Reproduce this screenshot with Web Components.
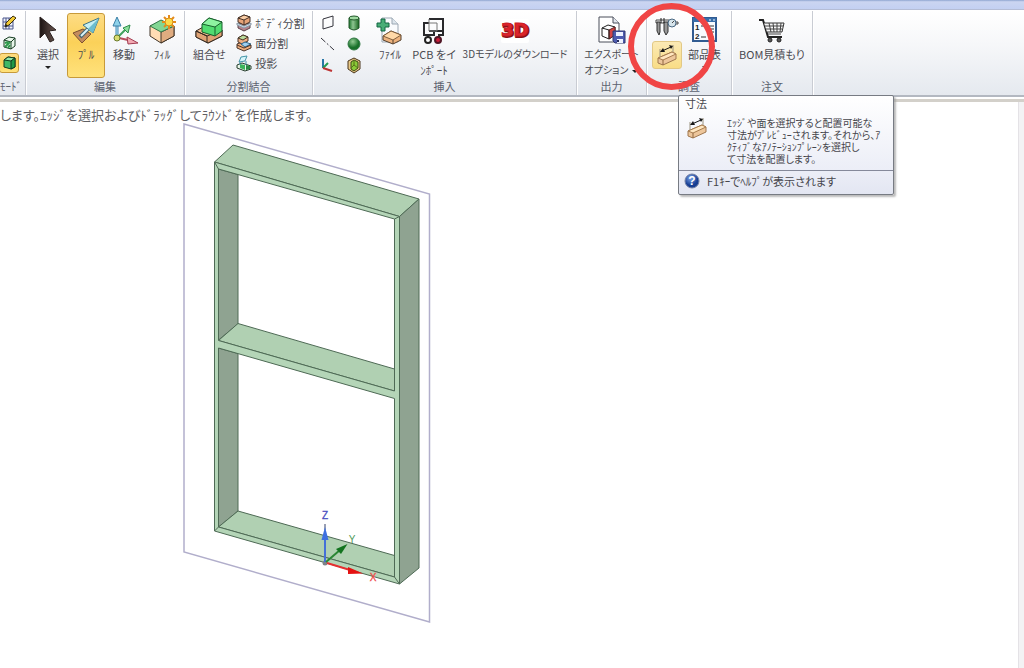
<!DOCTYPE html>
<html lang="ja">
<head>
<meta charset="utf-8">
<title>3D CAD</title>
<style>
html,body{margin:0;height:100%}
body{font:11px/16px "Noto Sans CJK JP",sans-serif;font-feature-settings:"palt";color:#4a4a50;background:#fff;overflow:hidden}
</style>
</head>
<body>
<cad-window></cad-window>
<script>
const ICONS = {
sketch:[16,16,`<path d="M2 3h10v11H2zM5 3v11M8 3v11M2 7h10M2 11h10" fill="#eef1fa" stroke="#4a568c"/><path d="M4 12l1-4 7-7 3 2-7 7z" fill="#f2ca35" stroke="#3a3010"/><path d="M4 12l1-3 2 2z" fill="#222"/>`],
section:[16,16,`<path d="M3 5l5-3 6 1v8l-4 3-7-2z" fill="#e8f5ea" stroke="#173d22"/><path d="M3 5l7 2 4-4M10 7v7" fill="none" stroke="#173d22"/><path d="M4 8l3-1M4 12l5-5M7 13l2-3" stroke="#2f9a4c" stroke-width="2"/>`],
solid:[16,16,`<path d="M3 5l4-3 7 1v9l-4 2-7-2z" fill="#3fb866" stroke="#123c20"/><path d="M3 5l4-3 7 1-4 3z" fill="#8ee5a6" stroke="#123c20"/><path d="M10 6l4-3v9l-4 2z" fill="#1f9a48" stroke="#123c20"/>`],
select:[28,28,`<defs><linearGradient id="a"><stop offset="0" stop-color="#1c1413"/><stop offset="1" stop-color="#6b5650"/></linearGradient></defs><path d="M6 1l16 13-7 1 5 9-4 2-5-9-5 5z" fill="url(#a)" stroke="#2a201e"/>`],
pull:[28,28,`<path d="M1 17l10-4 8 5-9 9z" fill="#c48c5e" stroke="#7c5030"/><path d="M8 21l9-9" stroke="#456673" stroke-width="4"/><path d="M9 20l9-9" stroke="#d9f4f8" stroke-width="2"/><path d="M27 2L11 9l10 8z" fill="#c5eff5" stroke="#3c7284"/><path d="M27 2L16 13l5 4z" fill="#6dbdce"/>`],
move:[28,28,`<path d="M7 22V8" stroke="#3e87b5" stroke-width="3"/><path d="M7 21V8" stroke="#bce7f4"/><path d="M7 1L3 10h8z" fill="#8fd2ea" stroke="#3a7fa6"/><path d="M8 21l7-7" stroke="#3fa05d" stroke-width="2"/><path d="M20 9l-7 3 5 5z" fill="#8ddf9d" stroke="#2d8b4a"/><path d="M9 22l9 2" stroke="#b84a5f" stroke-width="2"/><path d="M28 27l-11-6 1 7z" fill="#f3aab3" stroke="#a23b50"/><circle cx="7" cy="22" r="3" fill="#d9dd70" stroke="#6a792b"/>`],
fill:[28,28,`<path d="M2 10l12-5 12 5v10l-13 7-11-7z" fill="#ffdcb4" stroke="#403428"/><path d="M13 16l13-6v10l-13 7z" fill="#e0ac80" stroke="#403428"/><path d="M2 10l11-6 13 6-13 6z" fill="#82d693" stroke="#347849"/><path d="M21-1v14M14 6h14M16 1l10 10M16 11L26 1" stroke="#e58b1b" stroke-width="2"/><circle cx="21" cy="6" r="4" fill="#ffdc4b" stroke="#d78c17"/>`],
combine:[28,28,`<path d="M1 15l9-5 17 4v6l-14 7-12-6z" fill="#f1bd91" stroke="#332820"/><path d="M1 15l11 5 15-6v6l-14 7-12-6z" fill="#dfa273" stroke="#332820"/><path d="M1 15l11 5v7" fill="none" stroke="#332820"/><path d="M7 8l7-6 13 4v9l-7 5-13-4z" fill="#52dc70" stroke="#185f2c"/><path d="M7 8l7-6 13 4-7 5z" fill="#8df3a0" stroke="#185f2c"/><path d="M20 11v9" stroke="#185f2c"/>`],
splitbody:[16,16,`<path d="M2 9l5-2 7 2v4l-6 3-6-3z" fill="#b8838d" stroke="#5b444b"/><path d="M1 8l7 3 7-3v2l-7 3-7-3z" fill="#c8dcea" stroke="#8c98a4"/><path d="M2 3l6-3 6 2v5l-6 3-6-3z" fill="#e7a378" stroke="#443126"/><path d="M2 3l6-3 6 2-6 3zM8 5v5" fill="#f9cda5" stroke="#443126"/>`],
splitface:[16,16,`<path d="M1 9l5-2 9 3v3l-7 3-7-3z" fill="#efac7b" stroke="#49352a"/><path d="M2 3l5-3 5 2v4L6 9 2 7z" fill="#efaf82" stroke="#49352a"/><path d="M2 3l5-3 5 2-5 3z" fill="#b9dc9c" stroke="#49352a"/><path d="M5 9l4-2 6 2-6 3z" fill="#9fd0f2" stroke="#34698a"/><path d="M1 10l7 3 7-3" fill="none" stroke="#49352a"/>`],
project:[16,16,`<path d="M1 10l5-2 9 3v3l-6 2-8-3z" fill="#e8f4e8" stroke="#243c2b"/><path d="M4 9l5 1v5l-5-2z" fill="#3cb45b"/><path d="M10 10l4 1v3l-4 1z" fill="#298b43"/><path d="M5 2l6-1-2 5-6 1z" fill="#d8f6fb" stroke="#4595a8"/><path d="M4 7v3M10 6v4" stroke="#4595a8"/>`],
plane:[16,16,`<path d="M3 4l10-3v10L3 14z" fill="none" stroke="#34343c"/>`],
line:[16,16,`<path d="M1 2l13 12" stroke="#34343c" stroke-dasharray="6 2 2 2"/>`],
axes:[16,16,`<path d="M3 2v9" stroke="#2877a7" stroke-width="2"/><path d="M3 11l5-5" stroke="#239c50" stroke-width="2"/><path d="M3 11l9 3" stroke="#bd3333" stroke-width="2"/>`],
cylinder:[16,16,`<defs><linearGradient id="c"><stop stop-color="#1b742b"/><stop offset=".4" stop-color="#8ec591"/><stop offset="1" stop-color="#17651f"/></linearGradient></defs><path d="M3 3v10q5 4 10 0V3" fill="url(#c)" stroke="#205729"/><ellipse cx="8" cy="3" rx="5" ry="2" fill="#9ed8a0" stroke="#205729"/>`],
sphere:[16,16,`<defs><radialGradient id="s" cx=".4" cy=".3"><stop stop-color="#93cb93"/><stop offset="1" stop-color="#19712a"/></radialGradient></defs><circle cx="8" cy="8" r="6" fill="url(#s)" stroke="#327844"/>`],
shell:[16,16,`<path d="M2 4l6-3 6 3v8l-6 4-6-4z" fill="#e8c887" stroke="#49351c"/><path d="M5 5l3-2 4 2v6l-4 3-3-2z" fill="#8acb37" stroke="#3d4a16"/><path d="M8 3v5l-3 3M8 8l4 3" fill="none" stroke="#58701b"/>`],
file:[28,28,`<path d="M6 2h10l6 6v18H6z" fill="#f9fbfd" stroke="#9ba7b3"/><path d="M16 2v6h6" fill="#dce5ec" stroke="#9ba7b3"/><path d="M5 3h4v4h4v4H9v4H5v-4H1V7h4z" fill="#48ad76" stroke="#136643"/><path d="M7 20l8-5 10 4v5l-8 4-10-4z" fill="#edb27d" stroke="#54402d"/><path d="M7 20l8-5 10 4-8 5z" fill="#ffd9a8" stroke="#805e3c"/><path d="M17 24v4" stroke="#54402d"/>`],
pcb:[28,28,`<path d="M9 3h14v12H9M9 7H4v12h4v3M23 15v4h-4v3M14 15v4H8" fill="none" stroke="#29292c" stroke-width="2"/><path d="M9 3v12h8V7H9" fill="none" stroke="#777"/><circle cx="8" cy="24" r="3" fill="#fff" stroke="#222" stroke-width="2"/><circle cx="18" cy="24" r="3" fill="#c91d39" stroke="#501525" stroke-width="2"/>`],
three:[32,28,`<rect x="2" y="3" width="28" height="24" rx="2" fill="#fff"/><g font-family="DejaVu Sans" font-weight="bold" font-size="18"><text x="3" y="21" fill="#8a1218" stroke="#8a1218" stroke-width="2">3D</text><text x="2" y="20" fill="#df242b" stroke="#cc2028">3D</text></g>`],
export:[28,28,`<path d="M1 1h14l6 6v19H1z" fill="#fff" stroke="#4b4f5b"/><path d="M15 1v6h6" fill="#e3e7ee" stroke="#4b4f5b"/><path d="M4 12l6-3 7 2v8l-6 4-7-3z" fill="#fff" stroke="#222"/><path d="M11 14l6-3v8l-6 4z" fill="#d64646" stroke="#672323"/><path d="M4 12l7 2v9" fill="none" stroke="#222"/><path d="M15 15h12v12H17l-2-2z" fill="#4e5caf" stroke="#30366f"/><path d="M18 16h7v4h-7zM19 23h6v4h-6z" fill="#eef2ff"/><path d="M20 24v2" stroke="#252c5a" stroke-width="2"/>`],
caliper:[22,18,`<path d="M0 2h13v3H0z" fill="#f4f4f4" stroke="#444"/><path d="M1 4h3v10l-1 3-2-4zM8 4h4v10l-2 3-2-4z" fill="#999" stroke="#333"/><path d="M5 0v5M8 0v5" stroke="#222"/><circle cx="16" cy="5" r="4" fill="#d6e4eb" stroke="#496882"/><path d="M16 5l2-2M20 4h2v2h-2" stroke="#444" fill="none"/>`],
dimension:[22,22,`<path d="M2 14l14-6 4 2v5L7 21l-5-2z" fill="#edc69b" stroke="#9f774f"/><path d="M2 14l14-6 4 2-13 6z" fill="#ffe6bf" stroke="#a67b4e"/><path d="M7 16v5" stroke="#8f673f"/><path d="M4 5v8M17 1v7" stroke="#9a927e"/><path d="M6 7l9-4" stroke="#171717"/><path d="M4 8l3-4 2 4zM17 2l-4-1 2 4z" fill="#171717"/>`],
parts:[28,28,`<path d="M2 2h23v23H2z" fill="#f8fbff" stroke="#315b91" stroke-width="2"/><path d="M2 2h23v4H2z" fill="#376da9"/><path d="M18 4h2M22 4h2" stroke="#fff"/><g font-family="Liberation Sans" font-weight="bold" font-size="8" fill="#222"><text x="4" y="14">1</text><text x="4" y="23">2</text></g><path d="M10 10h5M16 13h7M16 16h7M10 21h5M17 21h6" stroke="#333"/><path d="M17 10h6" stroke="#333"/>`],
cart:[28,28,`<path d="M1 4h4l5 17h14" fill="none" stroke="#222" stroke-width="2"/><path d="M6 7h20l-2 9H9" fill="#f6f6f6" stroke="#333"/><path d="M7 10h18M8 13h16M11 7l2 9M15 7l1 9M19 7v9M23 7l-1 9" stroke="#444"/><path d="M10 18h13" stroke="#444"/><circle cx="12" cy="24" r="2" fill="#555" stroke="#222"/><circle cx="21" cy="24" r="2" fill="#555" stroke="#222"/>`],
help:[16,16,`<defs><radialGradient id="h" cx=".4" cy=".3"><stop stop-color="#7da6ec"/><stop offset="1" stop-color="#163d92"/></radialGradient></defs><circle cx="8" cy="8" r="7" fill="url(#h)" stroke="#7280a5"/><text x="8" y="12" text-anchor="middle" font-family="Liberation Sans" font-weight="bold" font-size="12" fill="#fff">?</text>`]
};

class CadIcon extends HTMLElement{
 connectedCallback(){
  const [w,h,body]=ICONS[this.getAttribute('name')];
  this.attachShadow({mode:'open'}).innerHTML=`<style>:host{display:block;flex:none}svg{display:block;overflow:visible}</style><svg width="${w}" height="${h}" viewBox="0 0 ${w} ${h}" aria-hidden="true">${body}</svg>`;
 }
}
customElements.define('cad-icon',CadIcon);

class RibbonTool extends HTMLElement{
 connectedCallback(){
  const title=this.getAttribute('title-text');
  this.attachShadow({mode:'open'}).innerHTML=`<style>
  :host{display:block;flex:none}
  button{all:unset;box-sizing:border-box;display:flex;width:100%;align-items:center;cursor:default;white-space:nowrap;border:1px solid transparent;border-radius:3px}
  :host([large]) button{flex-direction:column;height:65px;padding-top:2px;gap:2px;text-align:center}
  :host(:not([large])) button{height:20px;gap:3px;padding:0 1px}
  :host([square]) button{height:28px;justify-content:center}
  :host([active]) button{background:linear-gradient(#fddc85,#fbd159 45%,#ffe27c);border-color:#c79a3a}
  :host([soft]) button{background:linear-gradient(#fbeab5,#f9dd86);border-color:#e2c986}
  :host([compact]) span{font-size:10px}
  .drop{width:0;height:0;margin-top:2px;border:3px solid transparent;border-top-color:#222;border-bottom:0}
  </style><button type="button" ${title?`aria-label="${title}"`:''}><cad-icon name="${this.getAttribute('icon')}"></cad-icon>${title?'':'<span><slot></slot></span>'}${this.hasAttribute('drop')?'<i class="drop"></i>':''}</button>`;
 }
}
customElements.define('ribbon-tool',RibbonTool);

class RibbonGroup extends HTMLElement{
 connectedCallback(){
  this.attachShadow({mode:'open'}).innerHTML=`<style>
  :host{display:flex;flex-direction:column;flex:none;box-sizing:border-box;position:relative;border-right:1px solid #c9ccd3;box-shadow:1px 0 #fff;padding-top:2px}
  .tools{display:flex;height:65px;justify-content:var(--tools,center);gap:var(--gap,0)}
  .name{text-align:center;color:#5c626f;white-space:nowrap}
  </style><div class="tools"><slot></slot></div><div class="name">${this.getAttribute('name')}</div><slot name="over"></slot>`;
 }
}
customElements.define('ribbon-group',RibbonGroup);

class ToolHint extends HTMLElement{
 connectedCallback(){
  this.attachShadow({mode:'open'}).innerHTML=`<style>
  :host{display:block;position:absolute;z-index:3;width:216px;box-sizing:border-box;border:1px solid #777b83;border-radius:2px;background:linear-gradient(#fff,#eceef7 75%,#e3e6f2);box-shadow:2px 2px 2px #999a;color:#46464c}
  .title{padding:0 6px;line-height:14px}
  .body{display:flex;align-items:flex-start;gap:19px;padding:7px 7px 5px;font-size:10px;line-height:12px;white-space:nowrap}
  .foot{display:flex;align-items:flex-start;gap:7px;padding:2px 5px 5px;border-top:1px solid #85899a}
  </style><div class="title"><slot name="title"></slot></div><div class="body"><cad-icon name="dimension"></cad-icon><div class="text"><slot></slot></div></div><div class="foot"><cad-icon name="help"></cad-icon><slot name="foot"></slot></div>`;
 }
}
customElements.define('tool-hint',ToolHint);

class CadRibbon extends HTMLElement{
 connectedCallback(){
  this.attachShadow({mode:'open'}).innerHTML=`<style>
  :host{display:block}
  .caption{height:9px;background:linear-gradient(#8fa5d0 0,#cbd5f1 20%,#c3d0f2);border-bottom:1px solid #b5bdd6}
  nav{display:flex;height:84px;background:linear-gradient(#fff,#f6f7f9 40%,#e5e9ef);border-top:1px solid #fff;border-bottom:2px solid #b3b8c1}
  .col{display:flex;flex-direction:column}
  .grid{display:grid;grid-template-columns:24px 24px;grid-auto-rows:21px;align-content:start;gap:0 2px}
  .mode{width:22px}
  .mark{position:absolute;box-sizing:border-box;left:-19px;top:-8px;width:87px;height:87px;border:6px solid #f04545;border-radius:50%;z-index:4;pointer-events:none}
  tool-hint{left:31px;top:84px}
  .mini{display:inline-block;vertical-align:middle;margin-left:4px;border:3px solid transparent;border-top-color:#222;border-bottom:0}
  .btn38{width:38px}
  </style>
  <div class="caption"></div>
  <nav aria-label="リボン">
   <ribbon-group name="ﾓｰﾄﾞ" style="width:26px;--tools:flex-end;padding-right:6px">
    <div class="col mode"><ribbon-tool icon="sketch" title-text="スケッチ"></ribbon-tool><ribbon-tool icon="section" title-text="断面"></ribbon-tool><ribbon-tool active icon="solid" title-text="3D"></ribbon-tool></div>
   </ribbon-group>
   <ribbon-group name="編集" style="width:159px">
    <ribbon-tool class="btn38" large drop icon="select">選択</ribbon-tool><ribbon-tool class="btn38" large active icon="pull">ﾌﾟﾙ</ribbon-tool><ribbon-tool class="btn38" large icon="move">移動</ribbon-tool><ribbon-tool class="btn38" large icon="fill">ﾌｨﾙ</ribbon-tool>
   </ribbon-group>
   <ribbon-group name="分割結合" style="width:128px;--gap:6px">
    <ribbon-tool class="btn38" large icon="combine">組合せ</ribbon-tool>
    <div class="col"><ribbon-tool icon="splitbody">ﾎﾞﾃﾞｨ分割</ribbon-tool><ribbon-tool icon="splitface">面分割</ribbon-tool><ribbon-tool icon="project">投影</ribbon-tool></div>
   </ribbon-group>
   <ribbon-group name="挿入" style="width:264px;--gap:3px">
    <div class="grid"><ribbon-tool icon="plane" title-text="平面"></ribbon-tool><ribbon-tool icon="cylinder" title-text="円筒"></ribbon-tool><ribbon-tool icon="line" title-text="軸"></ribbon-tool><ribbon-tool icon="sphere" title-text="球"></ribbon-tool><ribbon-tool icon="axes" title-text="座標系"></ribbon-tool><ribbon-tool icon="shell" title-text="シェル"></ribbon-tool></div>
    <ribbon-tool class="btn38" large icon="file">ﾌｧｲﾙ</ribbon-tool>
    <ribbon-tool large icon="pcb" style="width:44px">PCB をイ<br>ﾝﾎﾟｰﾄ</ribbon-tool>
    <ribbon-tool large compact icon="three" style="width:112px">3Dモデルのダウンロード</ribbon-tool>
   </ribbon-group>
   <ribbon-group name="出力" style="width:70px"><ribbon-tool large compact icon="export" style="width:66px">エクスポート<br>オプション<i class="mini"></i></ribbon-tool></ribbon-group>
   <ribbon-group name="調査" style="width:85px;--gap:1px">
    <div class="col"><ribbon-tool square icon="caliper" title-text="測定" style="width:30px"></ribbon-tool><ribbon-tool square soft icon="dimension" title-text="寸法" style="width:30px"></ribbon-tool></div>
    <ribbon-tool large drop icon="parts" style="width:44px">部品表</ribbon-tool>
    <div slot="over" class="mark"></div>
    <tool-hint slot="over" role="tooltip"><span slot="title">寸法</span>ｴｯｼﾞや面を選択すると配置可能な<br>寸法がﾌﾟﾚﾋﾞｭｰされます。それから、ｱ<br>ｸﾃｨﾌﾞなｱﾉﾃｰｼｮﾝﾌﾟﾚｰﾝを選択し<br>て寸法を配置します。<span slot="foot">F1ｷｰでﾍﾙﾌﾟが表示されます</span></tool-hint>
   </ribbon-group>
   <ribbon-group name="注文" style="width:81px"><ribbon-tool large icon="cart">BOM見積もり</ribbon-tool></ribbon-group>
  </nav>`;
 }
}
customElements.define('cad-ribbon',CadRibbon);

class ModelView extends HTMLElement{
 connectedCallback(){
  this.attachShadow({mode:'open'}).innerHTML=`<style>
  :host{display:flex;min-height:0;overflow:hidden;margin-top:2px;border-top:3px solid #d3d0ca}
  main{flex:1;min-width:0;padding-top:4px}
  p{margin:0;font-size:13px;line-height:18px;white-space:nowrap;color:#606064}
  svg{display:block;margin-left:180px;overflow:visible}
  .edge{width:5px;background:#f3f2f4;border-left:1px solid #e4e2e6}
  </style><main><p>します。ｴｯｼﾞを選択およびﾄﾞﾗｯｸﾞしてﾗｳﾝﾄﾞを作成します。</p>
  <svg width="260" height="510" viewBox="180 124 260 510" role="img" aria-label="窓枠モデル">
   <path d="M184 124L429.500 194V622L184 552z" fill="none" stroke="#b1aecb" stroke-width="1.500"/>
   <g stroke="#4e6a55" stroke-width="1" stroke-linejoin="round">
    <path d="M218.500 169L238 174.500V324L218.500 340z" fill="#8fa391"/>
    <path d="M218.500 348L238 353.500V511L218.500 527z" fill="#8fa391"/>
    <path d="M218.500 340.500L238 323.500L394.500 369V391z" fill="#b0d0b2"/>
    <path d="M218.500 527L238 511L394.500 555.500V577z" fill="#b0d0b2"/>
    <path d="M214.500 162L233 145L419 199L399.500 216.500z" fill="#b0d0b2"/>
    <path d="M399.500 216.500L419 199V568L399.500 584z" fill="#8fa391"/>
    <path fill-rule="evenodd" d="M214.500 162L399.500 216.500V584L214.500 531zM218.500 169V340.500L394.500 391V219zM218.500 348V527L394.500 577V398.500z" fill="#b4d5b7"/>
    <path d="M214.500 162L218.500 169M399.500 216.500L394.500 219M399.500 584L394.500 577M214.500 531L218.500 527"/>
   </g>
   <circle cx="325" cy="563" r="2.500" fill="#7d8389"/>
   <path d="M325 562V536" stroke="#4470d8" stroke-width="2"/><path d="M325 524V530" stroke="#34406a"/><path d="M325 527L321.500 540H328.500z" fill="#3e70e0"/>
   <path d="M326 562L340 550" stroke="#2a8634" stroke-width="2"/><path d="M347.500 544L336 549L341 554z" fill="#12741f"/>
   <path d="M327 563L350 570" stroke="#e53030" stroke-width="2"/><path d="M363 573.500L348 567V574z" fill="#e41212"/>
   <g font-family="Liberation Sans" font-size="10" text-anchor="middle"><text x="325" y="519" fill="#4a4fc0" stroke="#4a4fc0" stroke-width=".3">Z</text><text x="352" y="543" fill="#4f9a5a">Y</text><text x="373" y="581" fill="#ef4b4b" stroke="#ef4b4b" stroke-width=".3">X</text></g>
  </svg></main><div class="edge"></div>`;
 }
}
customElements.define('model-view',ModelView);

class CadWindow extends HTMLElement{
 connectedCallback(){
  this.attachShadow({mode:'open'}).innerHTML=`<style>:host{display:grid;grid-template-rows:auto minmax(0,1fr);height:100vh;overflow:hidden}cad-ribbon{position:relative;z-index:1}</style><cad-ribbon></cad-ribbon><model-view></model-view>`;
 }
}
customElements.define('cad-window',CadWindow);
</script>
</body>
</html>
